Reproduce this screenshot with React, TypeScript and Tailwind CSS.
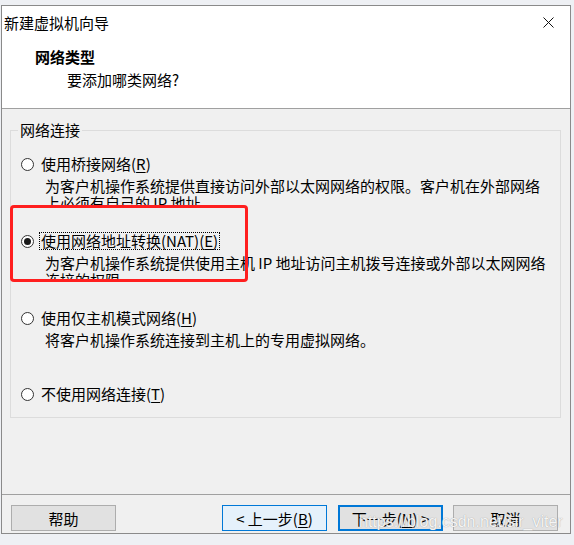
import React from "react";

const CJK = "font-['Noto_Sans_CJK_SC',sans-serif]";

function Radio({ checked }: { checked?: boolean }) {
  return (
    <span className="w-[13px] h-[13px] rounded-full border border-[#333333] bg-white flex items-center justify-center shrink-0">
      {checked ? <span className="w-[7px] h-[7px] rounded-full bg-[#1a1a1a]" /> : null}
    </span>
  );
}

function Option({
  label,
  hot,
  checked,
  focus,
  desc,
  h,
}: {
  label: string;
  hot: string;
  checked?: boolean;
  focus?: boolean;
  desc?: string;
  h: string;
}) {
  return (
    <div className={`${h} flex flex-col`}>
      <div className="flex items-center h-[18px]">
        <Radio checked={checked} />
        <span
          className={`ml-[5px] h-[18px] px-[1px] leading-[16px] border ${
            focus ? "border-dotted border-black" : "border-transparent"
          }`}
        >
          {label}(<span className="underline underline-offset-2">{hot}</span>)
        </span>
      </div>
      {desc ? (
        <div className="ml-[24px] mt-[4px] max-h-[28px] overflow-hidden leading-[17px] w-[505px]">
          {desc}
        </div>
      ) : null}
    </div>
  );
}

function Btn({
  children,
  kind,
  className,
}: {
  children: React.ReactNode;
  kind?: "hover" | "default";
  className?: string;
}) {
  const style =
    kind === "hover"
      ? "bg-[#e5f1fb] border border-[#0078d7]"
      : kind === "default"
      ? "bg-[#e1e1e1] border-2 border-[#0078d7]"
      : "bg-[#e1e1e1] border border-[#adadad]";
  return (
    <div
      className={`w-[105px] h-[26px] flex items-center justify-center text-[15px] leading-none text-black ${style} ${className ?? ""}`}
    >
      {children}
    </div>
  );
}

export default function App() {
  return (
    <div className={`w-[574px] h-[545px] bg-[#eef0f4] pt-[5px] pl-[1px] relative overflow-hidden ${CJK} text-black`}>
      <div className="w-[570px] h-[529px] border border-[#8a8a8a] flex flex-col bg-white">
        {/* title bar */}
        <div className="h-[32px] flex items-center justify-between pl-[2px] pr-[16px] text-[15px]">
          <span className="leading-none">新建虚拟机向导</span>
          <svg width="11" height="11" viewBox="0 0 11 11">
            <path d="M0.5 0.5 L10.5 10.5 M10.5 0.5 L0.5 10.5" stroke="#111" strokeWidth="1" />
          </svg>
        </div>
        {/* header */}
        <div className="h-[70px] pt-[10px] flex flex-col text-[15px]">
          <div className="pl-[33px] leading-[18px] font-bold">网络类型</div>
          <div className="pl-[65px] mt-[5px] leading-[18px]">要添加哪类网络?</div>
        </div>
        <div className="h-px bg-[#a0a0a0]" />
        {/* body */}
        <div className="h-[385px] bg-[#f0f0f0] pt-[21px] pl-[8px] text-[15px]">
          <div className="w-[551px] h-[288px] border border-[#dcdcdc] relative pt-[24px] pl-[10px] flex flex-col">
            <span className="absolute -top-[10px] left-[7px] px-[2px] bg-[#f0f0f0] leading-[18px]">网络连接</span>
            <Option
              h="h-[77px]"
              label="使用桥接网络"
              hot="R"
              desc="为客户机操作系统提供直接访问外部以太网网络的权限。客户机在外部网络上必须有自己的 IP 地址。"
            />
            <Option
              h="h-[77px]"
              label="使用网络地址转换(NAT)"
              hot="E"
              checked
              focus
              desc="为客户机操作系统提供使用主机 IP 地址访问主机拨号连接或外部以太网网络连接的权限。"
            />
            <Option
              h="h-[76px]"
              label="使用仅主机模式网络"
              hot="H"
              desc="将客户机操作系统连接到主机上的专用虚拟网络。"
            />
            <Option h="h-[20px]" label="不使用网络连接" hot="T" />
          </div>
        </div>
        <div className="h-px bg-[#a0a0a0]" />
        {/* footer */}
        <div className="flex-1 bg-[#f0f0f0] pt-[10px] pl-[9px] flex items-start">
          <Btn>帮助</Btn>
          <Btn kind="hover" className="ml-[106px]">
            &lt; 上一步(<span className="underline underline-offset-2">B</span>)
          </Btn>
          <Btn kind="default" className="ml-[11px]">
            下一步(<span className="underline underline-offset-2">N</span>) &gt;
          </Btn>
          <Btn className="ml-[10px]">取消</Btn>
        </div>
      </div>

      {/* red annotation box */}
      <div className="absolute left-[10px] top-[205px] w-[238px] h-[77px] border-[3px] border-[#ff1f1f] rounded-[4px]" />

      {/* watermark */}
      <div className="absolute left-[359px] top-[513px] text-[16px] leading-[18px] font-['Liberation_Sans',Arial,sans-serif] text-white/90 [text-shadow:0_0_1px_#8a8a8a]">
        https://blog.csdn.net/sir_viter
      </div>
    </div>
  );
}
